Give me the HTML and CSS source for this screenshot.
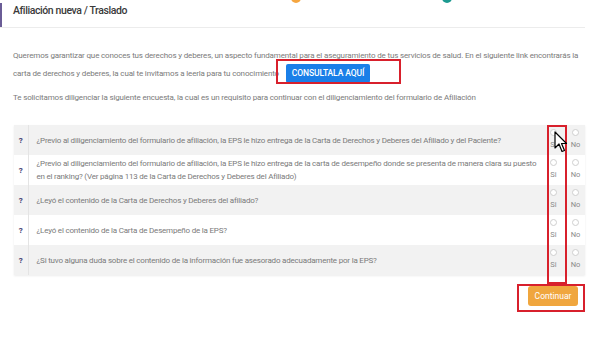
FILE: index.html
```html
<!DOCTYPE html>
<html lang="es">
  <head>
    <meta charset="UTF-8" />
    <meta name="viewport" content="width=device-width, initial-scale=1.0" />
    <title>Afiliación nueva / Traslado</title>
    <link rel="stylesheet" href="styles.css">
  </head>
  <body>
    <div class="page">
      <div class="stepper">
        <span class="step step-done"></span>
        <span class="step step-current"></span>
      </div>

      <div class="header">
        <h1 class="title">Afiliación nueva / Traslado</h1>
      </div>

      <div class="content">
        <p class="intro">Queremos garantizar que conoces tus derechos y deberes, un aspecto fundamental para el aseguramiento de tus servicios de salud. En el siguiente link encontrarás la carta de derechos y deberes, la cual te invitamos a leerla para tu conocimiento <a class="btn-consulta" href="#">CONSULTALA AQUÍ</a></p>
        <p class="intro intro-2">Te solicitamos diligenciar la siguiente encuesta, la cual es un requisito para continuar con el diligenciamiento del formulario de Afiliación</p>

        <table class="survey">
          <tr>
            <td class="q-icon">?</td>
            <td class="q-text">¿Previo al diligenciamiento del formulario de afiliación, la EPS le hizo entrega de la Carta de Derechos y Deberes del Afiliado y del Paciente?</td>
            <td class="q-answer">
              <div class="answers">
                <label class="option"><input type="radio" name="p1"><span>Si</span></label>
                <label class="option"><input type="radio" name="p1"><span>No</span></label>
              </div>
            </td>
          </tr>
          <tr>
            <td class="q-icon">?</td>
            <td class="q-text">¿Previo al diligenciamiento del formulario de afiliación, la EPS le hizo entrega de la carta de desempeño donde se presenta de manera clara su puesto en el ranking? (Ver página 113 de la Carta de Derechos y Deberes del Afiliado)</td>
            <td class="q-answer">
              <div class="answers">
                <label class="option"><input type="radio" name="p2"><span>Si</span></label>
                <label class="option"><input type="radio" name="p2"><span>No</span></label>
              </div>
            </td>
          </tr>
          <tr>
            <td class="q-icon">?</td>
            <td class="q-text">¿Leyó el contenido de la Carta de Derechos y Deberes del afiliado?</td>
            <td class="q-answer">
              <div class="answers">
                <label class="option"><input type="radio" name="p3"><span>Si</span></label>
                <label class="option"><input type="radio" name="p3"><span>No</span></label>
              </div>
            </td>
          </tr>
          <tr>
            <td class="q-icon">?</td>
            <td class="q-text">¿Leyó el contenido de la Carta de Desempeño de la EPS?</td>
            <td class="q-answer">
              <div class="answers">
                <label class="option"><input type="radio" name="p4"><span>Si</span></label>
                <label class="option"><input type="radio" name="p4"><span>No</span></label>
              </div>
            </td>
          </tr>
          <tr>
            <td class="q-icon">?</td>
            <td class="q-text">¿Si tuvo alguna duda sobre el contenido de la información fue asesorado adecuadamente por la EPS?</td>
            <td class="q-answer">
              <div class="answers">
                <label class="option"><input type="radio" name="p5"><span>Si</span></label>
                <label class="option"><input type="radio" name="p5"><span>No</span></label>
              </div>
            </td>
          </tr>
        </table>

        <div class="actions">
          <button class="btn-continuar">Continuar</button>
        </div>
      </div>

      <!-- marcas rojas del tutorial -->
      <div class="mark mark-consulta"></div>
      <div class="mark mark-si"></div>
      <div class="mark mark-continuar"></div>

      <svg class="cursor" width="14" height="22" viewBox="0 0 14 22">
        <path d="M1 1 L1 17 L5 13 L8 20.5 L10.5 19.5 L7.5 12.5 L12.5 12.5 Z" fill="#fff" stroke="#000" stroke-width="1.2" stroke-linejoin="round" />
      </svg>
    </div>
  </body>
</html>
```

FILE: styles.css
```css
* {
  box-sizing: border-box;
}
body {
  margin: 0;
  font-family: Roboto, "Liberation Sans", sans-serif;
  color: #7a7a7a;
  background-color: #fff;
  overflow: hidden;
}
.page {
  position: relative;
  width: 600px;
  height: 337px;
}
.stepper {
  display: flex;
  align-items: flex-end;
  gap: 141px;
  height: 3px;
  padding-left: 291px;
  overflow: hidden;
}
.step {
  flex: none;
  width: 10px;
  height: 10px;
  border-radius: 50%;
}
.step-done {
  background-color: #f5a640;
}
.step-current {
  background-color: #1c9a90;
}
.header {
  width: 585px;
  height: 25px;
  padding: 1px 13px 0;
  border-bottom: 1px solid #ececec;
  box-shadow: inset 2px 0 0 #6a5c96;
}
.title {
  margin: 0;
  font-size: 10.5px;
  line-height: 14px;
  font-weight: 500;
  color: #3a3a3a;
  letter-spacing: -0.4px;
}
.content {
  padding: 0 12px 0 13px;
}
.intro {
  margin: 19px 0 0;
  font-size: 8px;
  line-height: 17px;
  letter-spacing: -0.15px;
}
.intro-2 {
  margin-top: 6px;
}
.btn-consulta {
  display: inline-block;
  vertical-align: middle;
  height: 19px;
  line-height: 19px;
  padding: 0 6px;
  margin-left: 5px;
  background-color: #1a7fe8;
  color: #fff;
  font-size: 8.5px;
  font-weight: 500;
  letter-spacing: -0.1px;
  text-decoration: none;
  border-radius: 2px;
}
.survey {
  width: 571px;
  margin: 19px 0 0 1px;
  border-collapse: collapse;
  table-layout: fixed;
  box-shadow: 0 1px 2px rgba(0, 0, 0, 0.08);
}
.survey tr {
  height: 30px;
}
.survey tr:nth-child(odd) {
  background-color: #f2f2f2;
}
.q-icon {
  width: 14px;
  text-align: center;
  font-size: 8px;
  font-weight: 700;
  color: #3b3a6e;
  border-right: 1px solid #e4e4e4;
}
.q-text {
  padding: 2px 0 2px 8px;
  font-size: 8px;
  line-height: 13px;
  letter-spacing: -0.2px;
}
.q-answer {
  width: 39px;
  padding: 0;
  vertical-align: top;
}
.answers {
  display: flex;
  gap: 6px;
}
.option {
  display: flex;
  flex-direction: column;
  align-items: center;
  width: 16px;
  padding-top: 4px;
  gap: 4px;
  font-size: 7.5px;
  line-height: 10px;
  color: #8a8a8a;
}
.option input {
  appearance: none;
  width: 7px;
  height: 7px;
  margin: 0;
  border: 1px solid #cfcfcf;
  border-radius: 50%;
  background-color: #fff;
}
.actions {
  display: flex;
  justify-content: flex-end;
  padding-right: 10px;
  margin-top: 11px;
}
.btn-continuar {
  width: 50px;
  height: 20px;
  padding: 0;
  border: none;
  border-radius: 3px;
  background-color: #f0a63e;
  color: #fff;
  font-family: Roboto, "Liberation Sans", sans-serif;
  font-size: 8.5px;
}
.mark {
  position: absolute;
  border: 2px solid #d8202c;
}
.mark-consulta {
  left: 276px;
  top: 59px;
  width: 125px;
  height: 25px;
}
.mark-si {
  left: 547px;
  top: 125px;
  width: 20px;
  height: 159px;
}
.mark-continuar {
  left: 517px;
  top: 284px;
  width: 68px;
  height: 28px;
}
.cursor {
  position: absolute;
  left: 554px;
  top: 131px;
}
```
